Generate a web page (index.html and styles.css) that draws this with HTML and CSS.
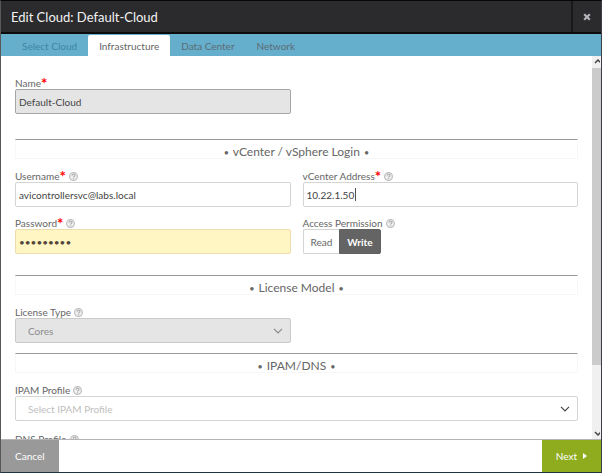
FILE: index.html
```html
<!DOCTYPE html>
<html lang="en">
<head>
<meta charset="utf-8">
<title>Edit Cloud: Default-Cloud</title>
<link rel="stylesheet" href="styles.css">
</head>
<body>
<svg class="defs" aria-hidden="true">
  <symbol id="help" viewBox="0 0 10 10">
    <circle cx="5" cy="5" r="4.300" fill="#f0f0f0" stroke="#bdbdbd" stroke-width="1.300"/>
    <path d="M3.400 4.100c0-2.100 3.200-2.100 3.200-.2 0 1.100-1.600 1.100-1.600 2.200M5 6.900v1" fill="none" stroke="#b0b0b0" stroke-width="1.300"/>
  </symbol>
  <symbol id="chevron" viewBox="0 0 10 6">
    <path d="M1 .8l4 4 4-4" fill="none" stroke="currentColor" stroke-width="1.200"/>
  </symbol>
</svg>
<main class="dialog">
  <header class="titlebar">
    <h1 class="title">Edit Cloud: Default-Cloud</h1>
    <button class="close" type="button" aria-label="Close">
      <svg viewBox="0 0 8 8" width="8" height="8"><path d="M1.200 1.200l5.600 5.600M6.800 1.200L1.200 6.800" stroke="#b4b4bb" stroke-width="2.200"/></svg>
    </button>
  </header>
  <nav class="tabs">
    <a class="tab tab-visited" href="#select-cloud">Select Cloud</a>
    <a class="tab tab-active" href="#infrastructure" aria-current="page">Infrastructure</a>
    <a class="tab" href="#data-center">Data Center</a>
    <a class="tab" href="#network">Network</a>
  </nav>
  <div class="body">
    <form class="form" id="cloud-form">
      <div class="row">
        <div class="field">
          <label class="label" for="name">Name<span class="required">*</span></label>
          <input class="control control-locked" id="name" type="text" value="Default-Cloud" readonly>
        </div>
      </div>

      <h2 class="section section-far"><span class="dot">•</span> vCenter / vSphere Login <span class="dot">•</span></h2>
      <div class="row">
        <div class="field">
          <label class="label" for="username">Username<span class="required">*</span><svg class="help"><use href="#help"/></svg></label>
          <input class="control" id="username" type="text" value="avicontrollersvc@labs.local">
        </div>
        <div class="field">
          <label class="label" for="address">vCenter Address<span class="required">*</span><svg class="help"><use href="#help"/></svg></label>
          <div class="with-caret">
            <input class="control" id="address" type="text" value="10.22.1.50">
            <span class="caret"></span>
          </div>
        </div>
      </div>
      <div class="row">
        <div class="field">
          <label class="label" for="password">Password<span class="required">*</span><svg class="help"><use href="#help"/></svg></label>
          <input class="control control-filled" id="password" type="password" value="password1">
        </div>
        <div class="field">
          <span class="label" id="access-label">Access Permission<svg class="help"><use href="#help"/></svg></span>
          <div class="toggle" role="group" aria-labelledby="access-label">
            <button class="option" type="button" aria-pressed="false">Read</button>
            <button class="option option-on" type="button" aria-pressed="true">Write</button>
          </div>
        </div>
      </div>

      <h2 class="section section-mid"><span class="dot">•</span> License Model <span class="dot">•</span></h2>
      <div class="row">
        <div class="field">
          <label class="label" for="license">License Type<svg class="help"><use href="#help"/></svg></label>
          <div class="picker">
            <select class="control select select-off" id="license" disabled><option>Cores</option></select>
            <svg class="chevron chevron-off"><use href="#chevron"/></svg>
          </div>
        </div>
      </div>

      <h2 class="section section-near"><span class="dot">•</span> IPAM/DNS <span class="dot">•</span></h2>
      <div class="row">
        <div class="field field-wide">
          <label class="label" for="ipam">IPAM Profile<svg class="help"><use href="#help"/></svg></label>
          <div class="picker">
            <select class="control select select-empty" id="ipam"><option>Select IPAM Profile</option></select>
            <svg class="chevron"><use href="#chevron"/></svg>
          </div>
        </div>
      </div>
      <div class="row row-last">
        <div class="field field-wide">
          <label class="label" for="dns">DNS Profile<svg class="help"><use href="#help"/></svg></label>
          <div class="picker">
            <select class="control select select-empty" id="dns"><option>Select DNS Profile</option></select>
            <svg class="chevron"><use href="#chevron"/></svg>
          </div>
        </div>
      </div>
    </form>
    <div class="scrollbar" aria-hidden="true">
      <svg class="arrow" viewBox="0 0 8 12"><path d="M3 7l3-3 3 3" fill="none" stroke="#444" stroke-width="1.500"/></svg>
      <span class="thumb"></span>
      <span class="track"></span>
      <svg class="arrow" viewBox="0 0 8 12"><path d="M3 5l3 3 3-3" fill="none" stroke="#444" stroke-width="1.500"/></svg>
    </div>
  </div>
  <footer class="footer">
    <button class="action cancel" type="button">Cancel</button>
    <button class="action next" type="submit" form="cloud-form">Next
      <svg viewBox="0 0 4 6" width="4" height="6"><path d="M0 0l4 3-4 3z" fill="#fff"/></svg>
    </button>
  </footer>
</main>
</body>
</html>
```
FILE: styles.css
```css
* {
  box-sizing: border-box;
}

body {
  margin: 0;
  font: 10px/14px Lato, "Liberation Sans", sans-serif;
  color: #666;
}

button,
input,
select {
  font: inherit;
  margin: 0;
}

.defs {
  display: none;
}

.dialog {
  display: flex;
  flex-direction: column;
  height: 100vh;
  background: #fff;
  border: 1px solid #58585a;
  border-top-color: #04070a;
  border-right-color: #3c4046;
  border-bottom: 1px solid #1f3340;
}

.titlebar {
  display: flex;
  height: 33px;
  flex: none;
  background: #2b2a2c;
  border-bottom: 2px solid #0c0c0d;
}

.title {
  flex: 1;
  margin: 0;
  padding-left: 10px;
  font-size: 13px;
  font-weight: 400;
  line-height: 32px;
  color: #f2f2f2;
}

.close {
  width: 30px;
  padding: 0;
  border: 0;
  border-left: 2px solid #18181a;
  background: none;
}

.close svg {
  display: block;
  margin: 0 auto;
}

.tabs {
  display: flex;
  flex: none;
  height: 22px;
  padding: 1px 0 0 10px;
  background: #66afcc;
}

.tab {
  padding: 0 11px;
  line-height: 23px;
  color: #5b6c75;
  text-decoration: none;
}

.tab-visited {
  color: #3d86a3;
}

.tab-active {
  background: #fff;
  border-radius: 2px 2px 0 0;
  color: #666;
}

.body {
  display: flex;
  flex: 1;
  min-height: 0;
}

.form {
  flex: 1;
  min-width: 0;
  overflow: hidden;
  padding: 19px 14px 0;
}

.row {
  display: grid;
  grid-template-columns: 1fr 1fr;
  gap: 12px;
  margin-bottom: 8px;
}

.row-last {
  margin-top: 10px;
}

.field-wide {
  grid-column: 1 / -1;
}

.label {
  display: flex;
  align-items: center;
  height: 14px;
  padding-top: 2px;
}

.required {
  color: #f00;
  font-size: 15px;
  font-weight: 700;
}

.help {
  width: 9px;
  height: 9px;
  margin-left: 3px;
}

.control {
  display: block;
  width: 100%;
  height: 25px;
  padding: 0 3px;
  border: 1px solid #d4d4d4;
  border-radius: 2px;
  outline: 0;
  background: #fff;
  color: #444;
}

.control-locked {
  background: #e5e5e5;
  border-color: #a6a6a6;
}

.control-filled {
  background: #fff6c3;
  border-color: #eedcae;
  color: #54463a;
  font-size: 10px;
}

.with-caret,
.picker {
  position: relative;
}

.caret {
  position: absolute;
  left: 52px;
  top: 6px;
  width: 1px;
  height: 13px;
  background: #555;
}

.select {
  appearance: none;
  padding: 0 12px;
}

.select-off {
  background: #e5e5e5;
  border-color: #cacaca;
  color: #8a8a8a;
  opacity: 1;
}

.select-empty {
  color: #c0c0c0;
}

.chevron {
  position: absolute;
  right: 8px;
  top: 10px;
  width: 10px;
  height: 6px;
  color: #444;
  pointer-events: none;
}

.chevron-off {
  color: #8a8a8a;
}

.toggle {
  display: flex;
  height: 25px;
}

.option {
  padding: 0 7px;
  border: 1px solid #d4d4d4;
  border-right: 0;
  border-radius: 2px 0 0 2px;
  background: #fff;
  color: #666;
}

.option-on {
  border: 1px solid #606060;
  border-radius: 0 2px 2px 0;
  background: #646464;
  color: #fff;
  font-weight: 700;
}

.section {
  height: 20px;
  margin: 0 0 9px;
  border: 1px solid #f7f7f7;
  border-top-color: #999;
  font-size: 12px;
  font-weight: 400;
  line-height: 24px;
  text-align: center;
}

.dot {
  margin: 0 1px;
  font-size: 9px;
}

.section-far {
  margin-top: 25px;
}

.section-mid {
  margin-top: 21px;
}

.section-near {
  margin-top: 10px;
}

.scrollbar {
  display: flex;
  flex-direction: column;
  width: 9px;
  background: #f0f0f0;
}

.arrow {
  display: block;
  width: 8px;
  height: 12px;
}

.thumb {
  flex: 298;
  background: #cbcbcb;
}

.track {
  flex: 62;
}

.footer {
  display: flex;
  justify-content: space-between;
  flex: none;
  height: 33px;
  border-top: 1px solid #b4b4b4;
}

.action {
  border: 0;
  padding: 0 14px;
  color: #fff;
}

.cancel {
  background: #999;
}

.next {
  display: flex;
  align-items: center;
  gap: 6px;
  background: #8eac1e;
}
```
